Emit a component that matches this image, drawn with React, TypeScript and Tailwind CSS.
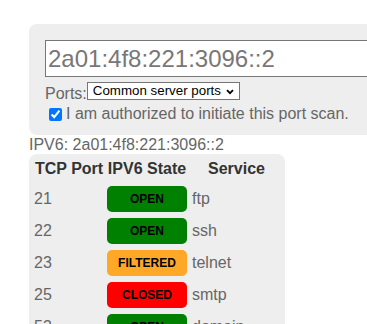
import React from "react";

type Row = { port: string; state: "OPEN" | "FILTERED" | "CLOSED"; service: string };

const rows: Row[] = [
  { port: "21", state: "OPEN", service: "ftp" },
  { port: "22", state: "OPEN", service: "ssh" },
  { port: "23", state: "FILTERED", service: "telnet" },
  { port: "25", state: "CLOSED", service: "smtp" },
  { port: "53", state: "OPEN", service: "domain" },
  { port: "80", state: "OPEN", service: "http" },
];

function Badge({ state }: { state: Row["state"] }) {
  const cls =
    state === "OPEN"
      ? "bg-[#008000]"
      : state === "FILTERED"
      ? "bg-[#ffa726]"
      : "bg-[#ff0000]";
  return (
    <div
      className={`${cls} w-[80px] h-[26px] rounded-[5px] flex items-center justify-center text-black text-[12px] font-bold leading-none`}
    >
      {state}
    </div>
  );
}

export default function App() {
  return (
    <div className="w-[367px] h-[324px] overflow-hidden bg-white font-['Liberation_Sans',Arial,sans-serif] text-[16px] text-[#666]">
      <div className="pt-[24px] pl-[29px]">
        <div className="w-[400px] h-[111px] bg-[#eeeeee] rounded-l-[8px] pl-[16px] pt-[16px]">
          <input
            readOnly
            value="2a01:4f8:221:3096::2"
            className="block w-[380px] h-[37px] border border-[#767676] bg-white px-[2px] text-[24px] text-[#777] outline-none font-['Liberation_Sans',Arial,sans-serif]"
          />
          <div className="mt-[5px] h-[21px] flex items-start">
            <span className="mt-[3px] leading-[18px]">Ports:</span>
            <div className="w-[153px] h-[18px] border border-[#767676] bg-white flex items-center justify-between pl-[5px] pr-[5px] text-[13.33px] text-black leading-none">
              <span>Common server ports</span>
              <svg width="8" height="6" viewBox="0 0 8 6" className="mt-[1px]">
                <path d="M1 1.2 L4 4.2 L7 1.2" fill="none" stroke="#000" strokeWidth="1.8" />
              </svg>
            </div>
          </div>
          <div className="mt-[2px] h-[18px] flex items-center leading-[18px]">
            <input
              type="checkbox"
              defaultChecked
              className="m-0 ml-[4px] mr-[4px] w-[13px] h-[13px] accent-[#0075ff]"
            />
            <span>I am authorized to initiate this port scan.</span>
          </div>
        </div>
        <div className="leading-[19px]">IPV6: 2a01:4f8:221:3096::2</div>
        <div className="w-[256px] bg-[#eeeeee] rounded-[8px] pt-[6px] pl-[6px] pb-[8px]">
          <div className="flex h-[23px] items-start leading-[18px] font-bold text-[#333]">
            <div className="w-[72px]">TCP Port</div>
            <div className="w-[80px] text-center">IPV6 State</div>
            <div className="w-[89px] ml-[5px] text-center">Service</div>
          </div>
          {rows.map((r) => (
            <div key={r.port} className="flex h-[32px] items-center">
              <div className="w-[72px] -ml-[1px] pl-[0px]">{r.port}</div>
              <div className="w-[80px] ml-[1px]">
                <Badge state={r.state} />
              </div>
              <div className="w-[89px] ml-[5px]">{r.service}</div>
            </div>
          ))}
        </div>
      </div>
    </div>
  );
}
